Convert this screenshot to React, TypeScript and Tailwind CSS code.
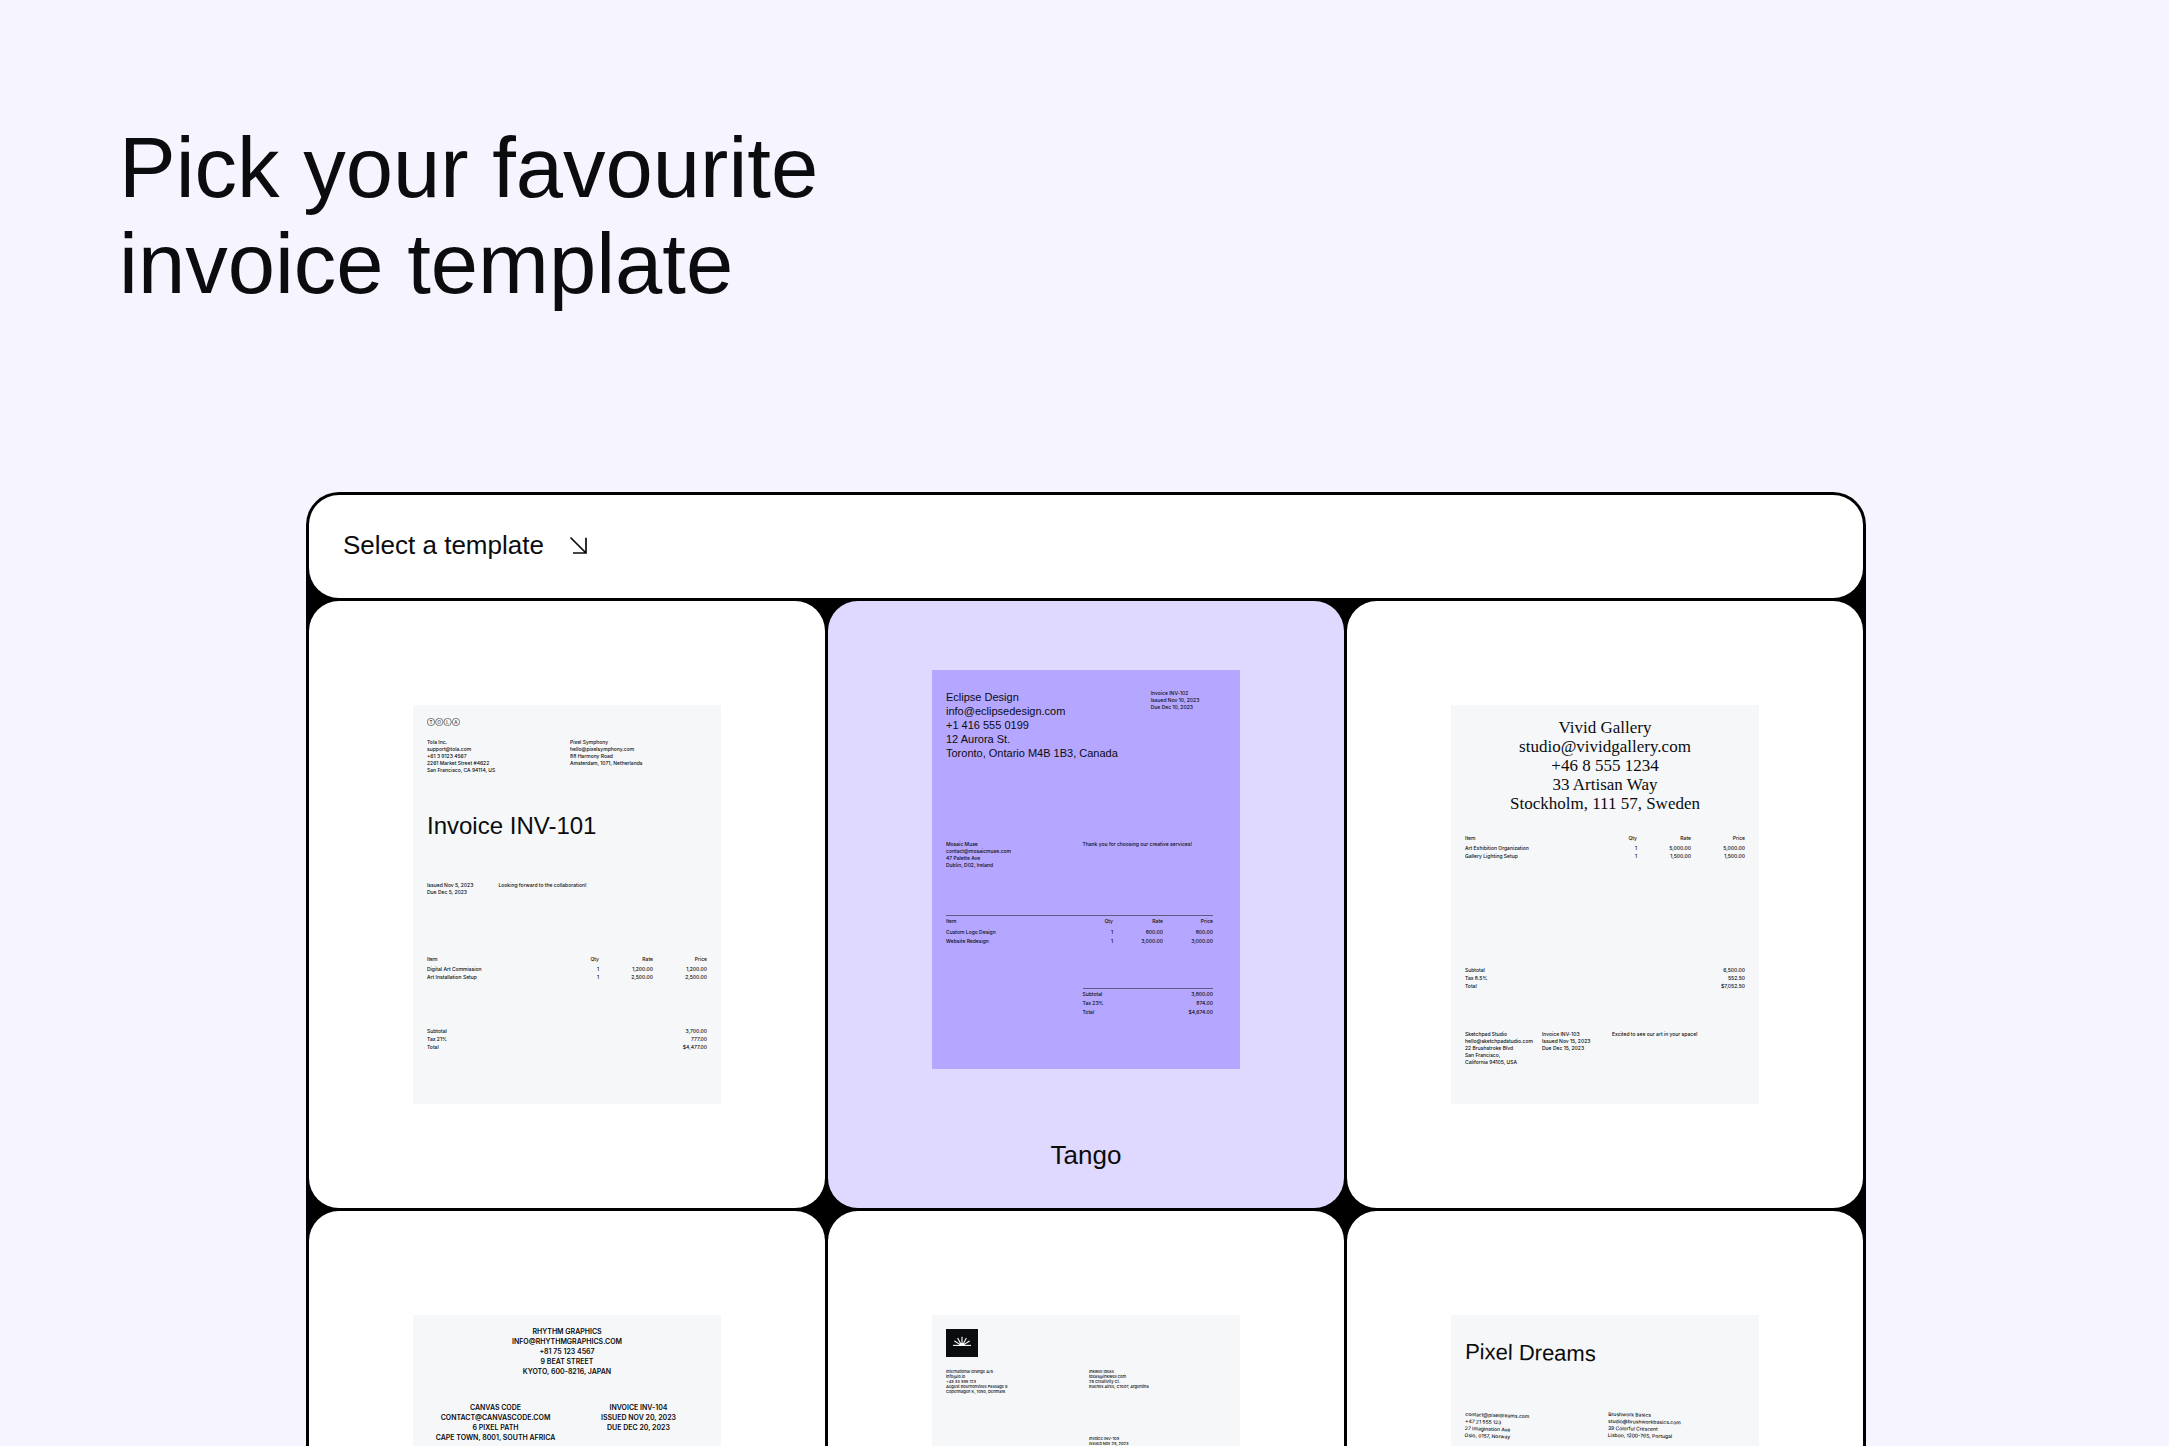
import React from 'react';
import clsx from 'clsx';

interface Item {
  name: string;
  qty: string;
  rate: string;
  price: string;
}

interface LinesProps {
  lines: string[];
  className?: string;
}

const Lines: React.FC<LinesProps> = ({ lines, className }) => (
  <div className={className}>
    {lines.map((line) => (
      <p key={line} className="whitespace-nowrap">
        {line}
      </p>
    ))}
  </div>
);

interface ItemsTableProps {
  items: Item[];
  ruled?: boolean;
  className?: string;
}

const ItemsTable: React.FC<ItemsTableProps> = ({ items, ruled, className }) => {
  const numberCol = ruled ? 'w-[50px]' : 'w-[54px]';

  return (
    <table
      className={clsx(
        'w-full table-fixed border-separate border-spacing-0',
        ruled ? 'leading-[9px]' : 'leading-[8px]',
        className
      )}
    >
      <thead>
        <tr className="text-right [&>th]:p-0 [&>th]:pb-[2px] [&>th]:font-medium">
          <th className={clsx('text-left', ruled && 'border-t border-[#0b0c0e]/50')}>
            <span className={clsx('block', ruled && 'pt-px')}>Item</span>
          </th>
          {['Qty', 'Rate', 'Price'].map((label) => (
            <th key={label} className={clsx(numberCol, ruled && 'border-t border-[#0b0c0e]/50')}>
              <span className={clsx('block', ruled && 'pt-px')}>{label}</span>
            </th>
          ))}
        </tr>
      </thead>
      <tbody>
        {items.map((item) => (
          <tr key={item.name} className="text-right [&>td]:p-0">
            <td className="text-left whitespace-nowrap">{item.name}</td>
            <td>{item.qty}</td>
            <td>{item.rate}</td>
            <td>{item.price}</td>
          </tr>
        ))}
      </tbody>
    </table>
  );
};

interface TotalsProps {
  rows: [string, string][];
  className?: string;
}

const Totals: React.FC<TotalsProps> = ({ rows, className }) => (
  <dl className={className}>
    {rows.map(([label, value]) => (
      <div key={label} className="flex justify-between">
        <dt>{label}</dt>
        <dd>{value}</dd>
      </div>
    ))}
  </dl>
);

interface SheetProps {
  className?: string;
  children: React.ReactNode;
}

const Sheet: React.FC<SheetProps> = ({ className = 'bg-[#f5f7f9] px-[14px]', children }) => (
  <div
    className={clsx(
      "h-[399px] w-[308px] overflow-hidden font-['Inter',sans-serif] text-[5px] leading-[7px] font-medium",
      className
    )}
  >
    {children}
  </div>
);

interface TemplateCardProps {
  id: string;
  name: string;
  active?: boolean;
  children: React.ReactNode;
}

const TemplateCard: React.FC<TemplateCardProps> = ({ id, name, active, children }) => (
  <a
    href={`#${id}`}
    aria-label={name}
    className={clsx(
      'flex h-[607px] flex-col items-center rounded-[30px]',
      active ? 'justify-start bg-[#dfd9ff] pt-[69px]' : 'justify-center bg-white'
    )}
  >
    {children}
    {active && <span className="mt-[68px] text-[26px] leading-9">{name}</span>}
  </a>
);

const TolaLogo = () => (
  <svg width="34" height="8" viewBox="0 0 34 8" className="block" fill="none" stroke="#0b0c0e" strokeWidth="0.5">
    {['T', 'O', 'L', 'A'].map((letter, i) => (
      <g key={letter}>
        <circle cx={4 + i * 8.3} cy="4" r="3.7" />
        <text
          x={4 + i * 8.3}
          y="5.6"
          textAnchor="middle"
          fontSize="4.5"
          fontWeight="400"
          fontFamily="Inter, sans-serif"
          fill="#0b0c0e"
          stroke="none"
        >
          {letter}
        </text>
      </g>
    ))}
  </svg>
);

const SunLogo = () => (
  <svg width="32" height="28" viewBox="0 0 32 28" className="block bg-[#0b0c0e]" fill="none" stroke="#fff">
    <path strokeWidth="1.1" d="M7 16.4h18" />
    <path
      strokeWidth="1.1"
      d="M16 15V7.8M15 15.2 11.6 9M17 15.2 20.4 9M14.2 15.6 8.4 12M17.8 15.6 23.6 12"
    />
    <path fill="#fff" stroke="none" d="M13 16.4a3 2.4 0 0 1 6 0z" />
  </svg>
);

const TolaTemplate = () => (
  <Sheet>
    <div className="pt-[13px]">
      <TolaLogo />
    </div>
    <div className="mt-[13px] grid grid-cols-4 gap-x-1.5">
      <Lines
        className="col-span-2"
        lines={['Tola Inc.', 'support@tola.com', '+61 3 9123 4567', '2261 Market Street #4622', 'San Francisco, CA 94114, US']}
      />
      <Lines
        className="col-span-2"
        lines={['Pixel Symphony', 'hello@pixelsymphony.com', '88 Harmony Road', 'Amsterdam, 1071, Netherlands']}
      />
    </div>
    <p className="mt-[38px] font-['Liberation_Sans',sans-serif] text-[24px] leading-7 font-normal">Invoice INV-101</p>
    <div className="mt-[42px] grid grid-cols-4 gap-x-1.5">
      <Lines lines={['Issued Nov 5, 2023', 'Due Dec 5, 2023']} />
      <p className="col-span-3">Looking forward to the collaboration!</p>
    </div>
    <ItemsTable
      className="mt-[59px]"
      items={[
        { name: 'Digital Art Commission', qty: '1', rate: '1,200.00', price: '1,200.00' },
        { name: 'Art Installation Setup', qty: '1', rate: '2,500.00', price: '2,500.00' },
      ]}
    />
    <Totals
      className="mt-[46px] leading-[8px]"
      rows={[
        ['Subtotal', '3,700.00'],
        ['Tax 21%', '777.00'],
        ['Total', '$4,477.00'],
      ]}
    />
  </Sheet>
);

const TangoTemplate = () => (
  <Sheet className="bg-[#b5a7ff] pr-[27px] pl-[14px]">
    <div className="grid grid-cols-4 gap-x-1.5 pt-5">
      <Lines
        className="col-span-3 font-['Liberation_Sans',sans-serif] text-[11px] leading-[14px] font-normal"
        lines={['Eclipse Design', 'info@eclipsedesign.com', '+1 416 555 0199', '12 Aurora St.', 'Toronto, Ontario M4B 1B3, Canada']}
      />
      <Lines lines={['Invoice INV-102', 'Issued Nov 10, 2023', 'Due Dec 10, 2023']} />
    </div>
    <div className="mt-[81px] grid grid-cols-2 gap-x-1.5">
      <Lines lines={['Mosaic Muse', 'contact@mosaicmuse.com', '47 Palette Ave', 'Dublin, D02, Ireland']} />
      <p>Thank you for choosing our creative services!</p>
    </div>
    <ItemsTable
      ruled
      className="mt-[46px]"
      items={[
        { name: 'Custom Logo Design', qty: '1', rate: '800.00', price: '800.00' },
        { name: 'Website Redesign', qty: '1', rate: '3,000.00', price: '3,000.00' },
      ]}
    />
    <div className="mt-[42px] grid grid-cols-2 gap-x-1.5">
      <Totals
        className="col-start-2 border-t border-[#0b0c0e]/50 pt-px leading-[9px]"
        rows={[
          ['Subtotal', '3,800.00'],
          ['Tax 23%', '874.00'],
          ['Total', '$4,674.00'],
        ]}
      />
    </div>
  </Sheet>
);

const VividTemplate = () => (
  <Sheet>
    <Lines
      className="pt-[13px] text-center font-['Liberation_Serif',serif] text-[17px] leading-[19px] font-normal"
      lines={['Vivid Gallery', 'studio@vividgallery.com', '+46 8 555 1234', '33 Artisan Way', 'Stockholm, 111 57, Sweden']}
    />
    <ItemsTable
      className="mt-[21px]"
      items={[
        { name: 'Art Exhibition Organization', qty: '1', rate: '5,000.00', price: '5,000.00' },
        { name: 'Gallery Lighting Setup', qty: '1', rate: '1,500.00', price: '1,500.00' },
      ]}
    />
    <Totals
      className="mt-[106px] leading-[8px]"
      rows={[
        ['Subtotal', '6,500.00'],
        ['Tax 8.5%', '552.50'],
        ['Total', '$7,052.50'],
      ]}
    />
    <div className="mt-[41px] grid grid-cols-[77px_70px_1fr]">
      <Lines
        lines={['Sketchpad Studio', 'hello@sketchpadstudio.com', '22 Brushstroke Blvd', 'San Francisco,', 'California 94105, USA']}
      />
      <Lines lines={['Invoice INV-103', 'Issued Nov 15, 2023', 'Due Dec 15, 2023']} />
      <p>Excited to see our art in your space!</p>
    </div>
  </Sheet>
);

const RhythmTemplate = () => (
  <Sheet>
    <div className="pt-3 text-center text-[7px] leading-[10px] font-semibold uppercase">
      <Lines lines={['Rhythm Graphics', 'info@rhythmgraphics.com', '+81 75 123 4567', '9 Beat Street', 'Kyoto, 600-8216, Japan']} />
      <div className="mt-[26px] grid grid-cols-2 gap-x-1.5">
        <Lines lines={['Canvas Code', 'contact@canvascode.com', '6 Pixel Path', 'Cape Town, 8001, South Africa']} />
        <Lines lines={['Invoice INV-104', 'Issued Nov 20, 2023', 'Due Dec 20, 2023']} />
      </div>
    </div>
  </Sheet>
);

const OrangeTemplate = () => (
  <Sheet>
    <div className="pt-[14px] text-[4px] leading-[5px]">
      <SunLogo />
      <div className="mt-3 grid grid-cols-2 gap-x-1.5">
        <Lines
          lines={['International Orange A/S', 'info@io.io', '+45 33 555 123', 'August Bournonvilles Passage 8', 'Copenhagen K, 1050, Denmark']}
        />
        <Lines lines={['Inkwell Ideas', 'ideas@inkwell.com', '29 Creativity Ct.', 'Buenos Aires, C1007, Argentina']} />
      </div>
      <div className="mt-[42px] grid grid-cols-2 gap-x-1.5">
        <Lines className="col-start-2" lines={['Invoice INV-105', 'Issued Nov 25, 2023']} />
      </div>
    </div>
  </Sheet>
);

const PixelTemplate = () => (
  <Sheet>
    <p className="mt-[23px] origin-left rotate-1 font-['Liberation_Sans',sans-serif] text-[22px] leading-7 font-normal">
      Pixel Dreams
    </p>
    <div className="mt-[45px] grid grid-cols-2 gap-x-1.5">
      <Lines
        className="origin-left rotate-2"
        lines={['contact@pixeldreams.com', '+47 21 555 123', '27 Imagination Ave', 'Oslo, 0157, Norway']}
      />
      <Lines
        className="origin-left rotate-1"
        lines={['Brushwork Basics', 'studio@brushworkbasics.com', '39 Colorful Crescent', 'Lisbon, 1200-765, Portugal']}
      />
    </div>
  </Sheet>
);

export default function App() {
  return (
    <main className="h-screen overflow-hidden bg-[#f6f4ff] font-['Liberation_Sans',Arial,sans-serif] text-[#0b0c0e]">
      <h1 className="pt-[120px] pl-[119px] text-[85px] leading-[96px]">
        Pick your favourite
        <br />
        invoice template
      </h1>

      <section className="mt-[180px] mr-[303px] ml-[306px] flex flex-col gap-[3px] rounded-t-[33px] bg-black p-[3px]">
        <header className="flex h-[103px] items-center gap-6 rounded-[30px] bg-white pb-[3px] pl-[34px]">
          <h2 className="text-[26px] leading-9">Select a template</h2>
          <svg width="20" height="20" viewBox="0 0 20 20" fill="none" stroke="currentColor" strokeWidth="1.7">
            <path d="M2.5 2.5 18 18M18 2.8V18H5" />
          </svg>
        </header>

        <div className="grid grid-cols-3 gap-[3px]">
          <TemplateCard id="tola" name="Tola">
            <TolaTemplate />
          </TemplateCard>
          <TemplateCard id="tango" name="Tango" active>
            <TangoTemplate />
          </TemplateCard>
          <TemplateCard id="vivid" name="Vivid">
            <VividTemplate />
          </TemplateCard>
          <TemplateCard id="rhythm" name="Rhythm">
            <RhythmTemplate />
          </TemplateCard>
          <TemplateCard id="orange" name="Orange">
            <OrangeTemplate />
          </TemplateCard>
          <TemplateCard id="pixel" name="Pixel">
            <PixelTemplate />
          </TemplateCard>
        </div>
      </section>
    </main>
  );
}
